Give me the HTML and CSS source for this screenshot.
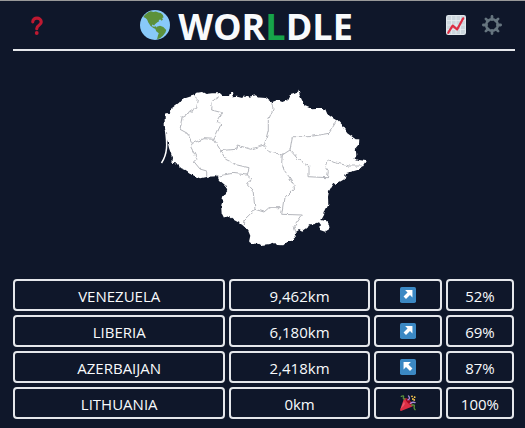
FILE: index.html
```html
<!DOCTYPE html>
<html lang="en">
<head>
<meta charset="utf-8">
<meta name="viewport" content="width=device-width, initial-scale=1">
<title>Worldle</title>
<link rel="stylesheet" href="styles.css">
</head>
<body>
<div class="app">
  <header class="header">
    <button class="icon-button help" type="button" aria-label="How to play">
      <svg class="icon" viewBox="0 0 36 36" aria-hidden="true"><path fill="none" stroke="#be1931" stroke-width="6" stroke-linecap="round" stroke-linejoin="round" d="M10 11C10 1.500 26 1.500 26 11.500C26 18.500 17.500 16.500 17.500 24"/><circle cx="17.500" cy="32.200" r="3.600" fill="#be1931"/></svg>
    </button>
    <h1 class="title">
      <svg class="globe" viewBox="0 0 36 36" aria-hidden="true"><circle cx="18" cy="18" r="18" fill="#88c9f9"/><path fill="#5c913b" d="M4 8.500C6 5 9.500 2.500 13 1.500L16 2.500L19 1.800L22 3L25 3.500L27.500 6L28.300 9L26.500 9.500L27.500 11.500L26 13L24.500 11.500L22.500 12L23 13.500L20.500 15L18 17L17 18.500L14.500 17.500L14.500 19.500L17 20L19 19.500L19.500 21.500L21 23L20 23.500L16 21.500L12.500 19L11 16.500L10 15L8.500 11.500L6.500 9.500ZM20 20L24 19L28 20.500L31.500 24L30.500 27L27.500 31L24 34L20.500 35L21.500 30.500L22.500 28L19.500 25.500L18.500 23Z"/></svg>
      <span class="wordmark">WOR<span class="accent">L</span>DLE</span>
    </h1>
    <button class="icon-button" type="button" aria-label="Statistics">
      <svg class="icon" viewBox="0 0 36 36" aria-hidden="true"><rect width="36" height="36" rx="4" fill="#e1e8ed"/><rect x="2" y="2" width="32" height="32" rx="2" fill="#ccd6dd"/><path fill="none" stroke="#e8eef2" stroke-width="1.500" d="M10 2V34M18 2V34M26 2V34M2 10H34M2 18H34M2 26H34"/><path fill="none" stroke="#dd2e44" stroke-width="4" stroke-linecap="round" stroke-linejoin="round" d="M4 32L12 19L20 26L31 6"/></svg>
    </button>
    <button class="icon-button" type="button" aria-label="Settings">
      <svg class="icon" viewBox="0 0 36 36" aria-hidden="true"><g stroke="#66757f" stroke-width="5" stroke-linecap="round"><path d="M18 2.500V8M18 28V33.500M2.500 18H8M28 18H33.500M7 7L11 11M25 25L29 29M29 7L25 11M11 25L7 29"/></g><circle cx="18" cy="18" r="10.500" fill="none" stroke="#66757f" stroke-width="4.500"/></svg>
    </button>
  </header>

  <main>
    <svg class="country" viewBox="0 0 220 175" role="img" aria-label="Country outline">
      <defs>
        <filter id="coast" x="-5%" y="-5%" width="110%" height="110%">
          <feTurbulence type="fractalNoise" baseFrequency="0.25" numOctaves="1" seed="4" result="noise"/>
          <feDisplacementMap in="SourceGraphic" in2="noise" scale="4" xChannelSelector="R" yChannelSelector="G"/>
        </filter>
      </defs>
      <g filter="url(#coast)" color-interpolation-filters="sRGB" transform="translate(-155 -80)">
        <path fill="#fff" d="M165.700 114L170 112.700L172 108.700L180 102.700L183 99.300L190 97L195.700 95.300L198.300 92.700L203 92L206.700 94L213 93.300L220 93.300L223 96L230 96L231.300 92L233 92L234 97.300L238 96.700L243.300 98L245 95.300L250 96.700L256.700 95.300L260 97.500L266.700 98L272.700 102.300L278.300 100L283.300 102L288.300 100L290.700 95.300L295 94L298 92.700L299.300 89.500L300.700 95.300L303.300 100.700L305.700 106L310 107.700L313 109.300L321.700 108.700L324 110.300L326.300 109.300L328.300 114L333.300 117.700L338.300 120.700L341.700 124.300L345 128.700L348.300 133.300L353.300 136.700L356.700 139.300L360.300 139.300L360 145L356.700 149L357.300 156L354.300 158.300L360 160L366.700 161L365 164L361.700 169L355 171L347.300 173L345.700 179L340 182.300L334 184.300L330 191L329 196.700L329.300 205L326.700 210L325 215L322.300 220L326.700 221L329 224.300L330 229.300L326 231.700L321 230L322 225L320 222.300L315 224.300L310 224.300L307.300 229L303.300 231.700L300 230L295.700 232.700L297 237.700L292.300 241L288.300 241L283.300 245.300L277 245L275 242.700L270 244.300L261 245L259 243.700L253 243.700L250 241.700L251.300 235.700L249.300 231L244.300 225.700L241 223.300L235 220L230 216L225 217.700L222.700 213.300L222.300 206.700L224 196.700L228.300 191L226 185L220 180L218.300 176.300L208 176.700L201 178.300L195 175.700L186.700 170L180 167.300L176.700 163.300L172.300 162.700L173 156.700L170 148L167.700 138L165.700 126.700Z"/>
        <path class="province" d="M195.700 95.300L198.300 100L196.700 108.300L190 112.700L183.300 116.700L181 129.300L188.300 133.300L193.300 143.300L191.700 146.700L197.700 158.300L195 161.700L201 169L207.700 171V176M220 96.700L213.300 100.700L212.700 110L222.700 112.700L218.300 120L221.700 125L215 139.300L205 138.700L193.300 143.300M215 139.300L221.700 150.700L226.700 159.300L238.300 165L250 167.700L248.300 175L233.300 173.300L218.300 176.300M221.700 150.700L236.700 149.300L238.300 145L251.700 149.300L265 145M272.700 102.300L274 109.300L269.300 120V130L265 146.700L270 151.700L283.300 155L291 150L293.300 136.700H310L330 133.300L337.300 121.300M283.300 155L282.700 163L285 170L290 176.700L296 186.700L285 198.300L282.700 214.300L303.300 215L295 226.700L296.700 231.700M291 150L298.300 158.300L310 166.700V176.700L328.300 177.700L329.300 171.700L326 167L328.300 160.700L350 166H363M248.300 175L253.300 179L247.700 183.300L254 190L256 209.300L245 220L244.300 225M256 209.300L265 212L270 207.700H282"/>
      </g>
      <path fill="none" stroke="#fff" stroke-width="1.500" d="M11.500 50C13.500 64 13.500 74 7.500 83"/>
    </svg>

    <table class="guesses" aria-label="Guesses">
      <tbody>
        <tr><td class="name">VENEZUELA</td><td class="distance">9,462km</td><td class="result"><svg class="mark" viewBox="0 0 36 36" role="img" aria-label="North-east"><rect width="36" height="36" rx="4" fill="#3b88c3"/><path fill="#fff" d="M28 7V23.500L22.500 18L13.500 27L8 21.500L17 12.500L11.500 7Z"/></svg></td><td>52%</td></tr>
        <tr><td class="name">LIBERIA</td><td class="distance">6,180km</td><td class="result"><svg class="mark" viewBox="0 0 36 36" role="img" aria-label="North-east"><rect width="36" height="36" rx="4" fill="#3b88c3"/><path fill="#fff" d="M28 7V23.500L22.500 18L13.500 27L8 21.500L17 12.500L11.500 7Z"/></svg></td><td>69%</td></tr>
        <tr><td class="name">AZERBAIJAN</td><td class="distance">2,418km</td><td class="result"><svg class="mark" viewBox="0 0 36 36" role="img" aria-label="North-west"><rect width="36" height="36" rx="4" fill="#3b88c3"/><path fill="#fff" d="M8 7V23.500L13.500 18L22.500 27L28 21.500L19 12.500L24.500 7Z"/></svg></td><td>87%</td></tr>
        <tr><td class="name">LITHUANIA</td><td class="distance">0km</td><td class="result"><svg class="mark" viewBox="0 0 36 36" role="img" aria-label="Correct"><path fill="#dd2e44" d="M9 8L0 33.500Q0 36 2.500 36L29 25.500Q28 17 21 11Q15 5.500 9 8Z"/><path fill="#a0041e" d="M11.600 7.600Q13 13 18 18Q23 24 28.400 24.400Q28 19 22 13Q16 7 11.600 7.600Z"/><path fill="#ea596e" d="M9 14L1 32L8 25L11 20Z"/><path fill="none" stroke="#aa8dd8" stroke-width="3" stroke-linecap="round" d="M18 11Q24 8 19 2M23 19Q28 15 34 17"/><path fill="none" stroke="#5c913b" stroke-width="3" stroke-linecap="round" d="M3 3Q9 0 8 5Q6 9 11 9M26 23Q34 21 32 26Q31 30 34 33"/><g fill="#ffcc4d"><circle cx="27" cy="3" r="2"/><circle cx="33" cy="5" r="2"/><circle cx="29" cy="9" r="2"/><circle cx="32" cy="11" r="2"/></g></svg></td><td>100%</td></tr>
      </tbody>
    </table>
  </main>
</div>
</body>
</html>
```
FILE: styles.css
```css
* {
  box-sizing: border-box;
}

body {
  margin: 0;
  min-height: 100vh;
  background: #0f172a;
  color: #f8fafc;
  font: 15px/24px "Open Sans", "Noto Sans", sans-serif;
}

.app {
  border-top: 1px solid #999;
  padding: 0 10px 0 13px;
}

.header {
  display: flex;
  align-items: center;
  height: 50px;
  padding: 0 13px 0 14px;
  border-bottom: 2px solid #e5e7eb;
}

.icon-button {
  display: flex;
  margin: 0;
  padding: 0;
  border: 0;
  background: none;
  cursor: pointer;
}

.icon-button + .icon-button {
  margin-left: 16px;
}

.icon {
  width: 20px;
  height: 20px;
}

.title {
  display: flex;
  flex: 1;
  align-items: center;
  justify-content: center;
  gap: 8px;
  margin: 0;
  font-size: 36px;
  line-height: 40px;
}

.wordmark {
  padding-top: 4px;
}

.globe {
  width: 30px;
  height: 30px;
}

.accent {
  color: #16a34a;
}

.help .icon {
  height: 19px;
}

.country {
  display: block;
  width: 42%;
  min-width: 220px;
  height: auto;
  margin: 29px auto 24px;
}

.province {
  fill: none;
  stroke: #b4b6bc;
  stroke-width: 1;
}

.guesses {
  display: block;
  padding-right: 1px;
}

.guesses tbody {
  display: grid;
  gap: 4px;
}

.guesses tr {
  display: grid;
  grid-template-columns: repeat(7, minmax(0, 1fr));
  gap: 4px;
}

.guesses td {
  display: flex;
  align-items: center;
  justify-content: center;
  height: 32px;
  padding: 2px 0 0;
  border: 2px solid #e5e7eb;
  border-radius: 4px;
}

.guesses .name {
  grid-column: span 3;
}

.guesses .distance {
  grid-column: span 2;
}

.guesses .result {
  padding: 0;
}

.mark {
  width: 16px;
  height: 16px;
}
```
